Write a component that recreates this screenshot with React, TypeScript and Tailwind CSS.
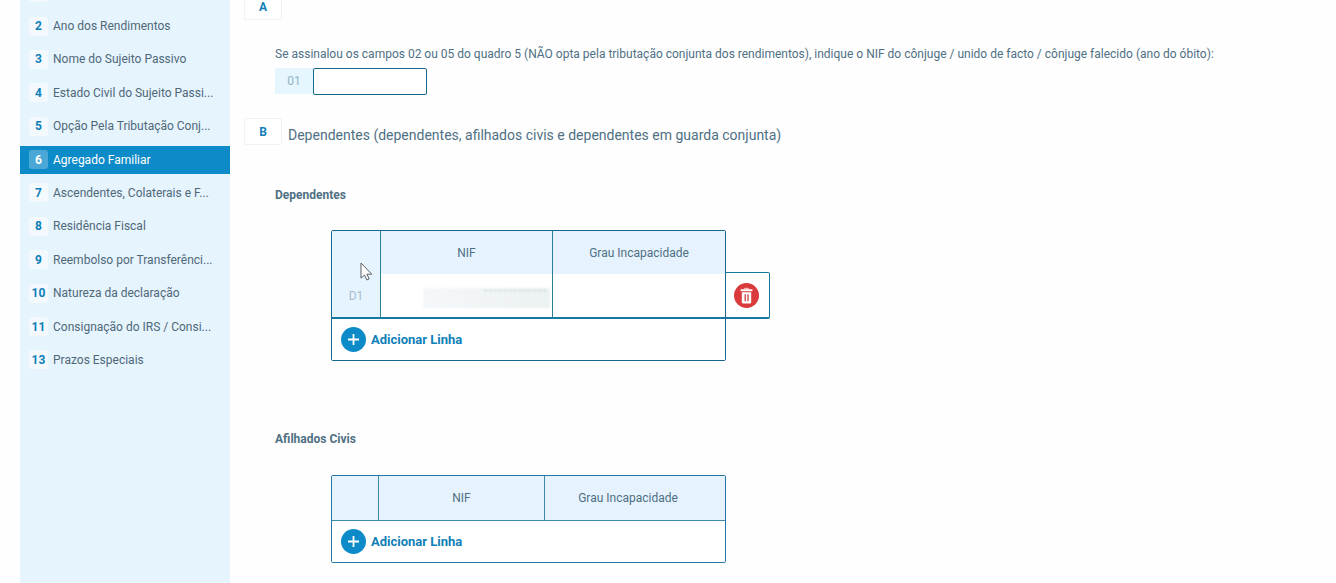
import React from 'react';

interface MenuItem {
  num: string;
  label: string;
}

const menuItems: MenuItem[] = [
  { num: '2', label: 'Ano dos Rendimentos' },
  { num: '3', label: 'Nome do Sujeito Passivo' },
  { num: '4', label: 'Estado Civil do Sujeito Passi...' },
  { num: '5', label: 'Opção Pela Tributação Conj...' },
  { num: '6', label: 'Agregado Familiar' },
  { num: '7', label: 'Ascendentes, Colaterais e F...' },
  { num: '8', label: 'Residência Fiscal' },
  { num: '9', label: 'Reembolso por Transferênci...' },
  { num: '10', label: 'Natureza da declaração' },
  { num: '11', label: 'Consignação do IRS / Consi...' },
  { num: '13', label: 'Prazos Especiais' },
];

const Sidebar: React.FC<{ active: string }> = ({ active }) => (
  <nav className="w-[210px] shrink-0 bg-[#e6f4fe]">
    <div className="ml-[9px] h-[2px] w-[19px] rounded-b-sm bg-[#f4f9fe]" />
    <ul className="mt-[10px] flex h-[362px] flex-col justify-between">
      {menuItems.map((item) => (
        <li key={item.num}>
          <a
            href="#"
            className={
              item.num === active
                ? 'flex h-7 items-center gap-[5px] bg-[#0d8bc9] pl-[9px] text-white'
                : 'flex h-7 items-center gap-[5px] pl-[9px] text-[#4f6878]'
            }
          >
            <span
              className={
                item.num === active
                  ? 'flex h-[19px] w-[19px] shrink-0 items-center justify-center rounded-[3px] bg-[#4ba8d6] font-bold'
                  : 'flex h-[19px] w-[19px] shrink-0 items-center justify-center rounded-[3px] bg-[#f4f9fe] font-bold text-[#0f7fb8]'
              }
            >
              {item.num}
            </span>
            <span className="whitespace-nowrap">{item.label}</span>
          </a>
        </li>
      ))}
    </ul>
  </nav>
);

const Letter: React.FC<{ children: string }> = ({ children }) => (
  <span className="flex h-[27px] w-[38px] shrink-0 items-center justify-center rounded-[2px] border border-[#eef3f6] bg-white font-bold text-[#0f7fb8]">
    {children}
  </span>
);

const AddRow: React.FC = () => (
  <button type="button" className="flex h-[41px] items-center gap-[5px] pl-[9px] text-[#0f7fb8]">
    <svg width="25" height="25" viewBox="0 0 25 25">
      <circle cx="12.5" cy="12.5" r="12.5" fill="#0d8bc9" />
      <path d="M12.5 7v11M7 12.5h11" stroke="#fff" strokeWidth="1.8" />
    </svg>
    <span className="text-[13px] font-bold">Adicionar Linha</span>
  </button>
);

const TrashIcon: React.FC = () => (
  <svg width="25" height="25" viewBox="0 0 25 25">
    <circle cx="12.5" cy="12.5" r="12.5" fill="#db3a3c" />
    <path d="M9.5 6.3q.4-1.5 1.8-1.5h2.4q1.4 0 1.8 1.5z" fill="#f7b9b6" />
    <rect x="6.5" y="6.3" width="12" height="1.9" rx=".6" fill="#fff" />
    <path d="M7.8 9.3h9.4v9.6q0 1.6-1.6 1.6H9.4q-1.6 0-1.6-1.6z" fill="#fff" />
    <path d="M11.2 11.3v7M14 11.3v7" stroke="#c93335" strokeWidth="1.2" />
  </svg>
);

const MouseCursor: React.FC = () => (
  <svg className="absolute top-[31px] left-[28px]" width="14" height="20" viewBox="0 0 14 20">
    <path
      d="M1 1v15.2l3.5-3.2 2.4 5 2.3-1.1-2.3-4.7h4.9z"
      fill="#fff"
      stroke="#5b5f66"
      strokeWidth="1"
    />
  </svg>
);

const App: React.FC = () => {
  return (
    <div className="flex min-h-screen bg-[#fefefe] pl-5 font-[Roboto,sans-serif] text-xs leading-4 text-[#4f7084]">
      <Sidebar active="6" />

      <main className="min-w-0 flex-1 overflow-hidden pl-[14px]">
        <div className="-mt-[7px]">
          <Letter>A</Letter>
        </div>

        <div className="mt-[26px] pl-[31px]">
          <label htmlFor="nif-conjuge" className="block">
            Se assinalou os campos 02 ou 05 do quadro 5 (NÃO opta pela tributação conjunta dos rendimentos), indique o
            NIF do cônjuge / unido de facto / cônjuge falecido (ano do óbito):
          </label>
          <div className="mt-[6px] flex h-[27px]">
            <span className="flex h-[26px] w-[38px] items-center justify-center bg-[#e5f6fe] text-[#8fb4c4]">01</span>
            <input
              id="nif-conjuge"
              type="text"
              className="h-[27px] w-[114px] rounded-[2px] border border-[#17668c] bg-white px-2 outline-none"
            />
          </div>
        </div>

        <div className="mt-[23px] flex items-end gap-[6px]">
          <Letter>B</Letter>
          <h2 className="text-sm">Dependentes (dependentes, afilhados civis e dependentes em guarda conjunta)</h2>
        </div>

        <section className="mt-[42px] pl-[31px]">
          <h3 className="font-bold">Dependentes</h3>
          <div className="mt-[27px] flex items-start pl-14">
            <table className="w-[395px] table-fixed border-separate border-spacing-0 rounded-[2px] border border-[#17668c]">
              <colgroup>
                <col className="w-[49px]" />
                <col className="w-[172px]" />
                <col />
              </colgroup>
              <tbody>
                <tr className="h-[43px] bg-[#e6f3fe]">
                  <td
                    rowSpan={2}
                    className="relative border-r border-b-2 border-r-[#2b7f99] border-b-[#17789f] bg-[#e5f4fe] p-0 pb-[13px] text-center align-bottom text-[#a9bccb]"
                  >
                    D1
                    <MouseCursor />
                  </td>
                  <th scope="col" className="border-r border-[#2b7f99] p-0 font-normal">
                    NIF
                  </th>
                  <th scope="col" className="p-0 font-normal">
                    Grau Incapacidade
                  </th>
                </tr>
                <tr className="h-[45px]">
                  <td className="border-r border-b-2 border-r-[#2b7f99] border-b-[#17789f] bg-white p-0 pt-1 pr-[2px]">
                    <div className="ml-auto h-5 w-[127px] bg-linear-to-r from-[#f5f8fa] to-[#ecf1f2] pt-[2px] pr-1 blur-[1px]">
                      <div className="ml-auto w-[62px] border-t border-dashed border-[#bcc6ca]" />
                    </div>
                  </td>
                  <td className="border-b-2 border-[#17789f] bg-white p-0" />
                </tr>
                <tr>
                  <td colSpan={3} className="bg-white p-0">
                    <AddRow />
                  </td>
                </tr>
              </tbody>
            </table>
            <button
              type="button"
              aria-label="Remover linha"
              className="mt-[42px] flex h-[47px] w-[44px] items-center justify-center rounded-r-[2px] border-t border-r border-b-2 border-[#17789f] bg-white pr-[2px]"
            >
              <TrashIcon />
            </button>
          </div>
        </section>

        <section className="mt-[70px] pl-[31px]">
          <h3 className="font-bold">Afilhados Civis</h3>
          <div className="mt-[28px] pl-14">
            <table className="w-[395px] table-fixed border-separate border-spacing-0 rounded-[2px] border border-[#2277a5]">
              <colgroup>
                <col className="w-[47px]" />
                <col className="w-[166px]" />
                <col />
              </colgroup>
              <tbody>
                <tr className="h-[45px] bg-[#e6f3fe]">
                  <td className="border-r border-b border-[#3c8aa8] p-0" />
                  <th scope="col" className="border-r border-b border-[#3c8aa8] p-0 font-normal">
                    NIF
                  </th>
                  <th scope="col" className="border-b border-[#3c8aa8] p-0 pr-[14px] font-normal">
                    Grau Incapacidade
                  </th>
                </tr>
                <tr>
                  <td colSpan={3} className="bg-white p-0">
                    <AddRow />
                  </td>
                </tr>
              </tbody>
            </table>
          </div>
        </section>
      </main>
    </div>
  );
};

export default App;
